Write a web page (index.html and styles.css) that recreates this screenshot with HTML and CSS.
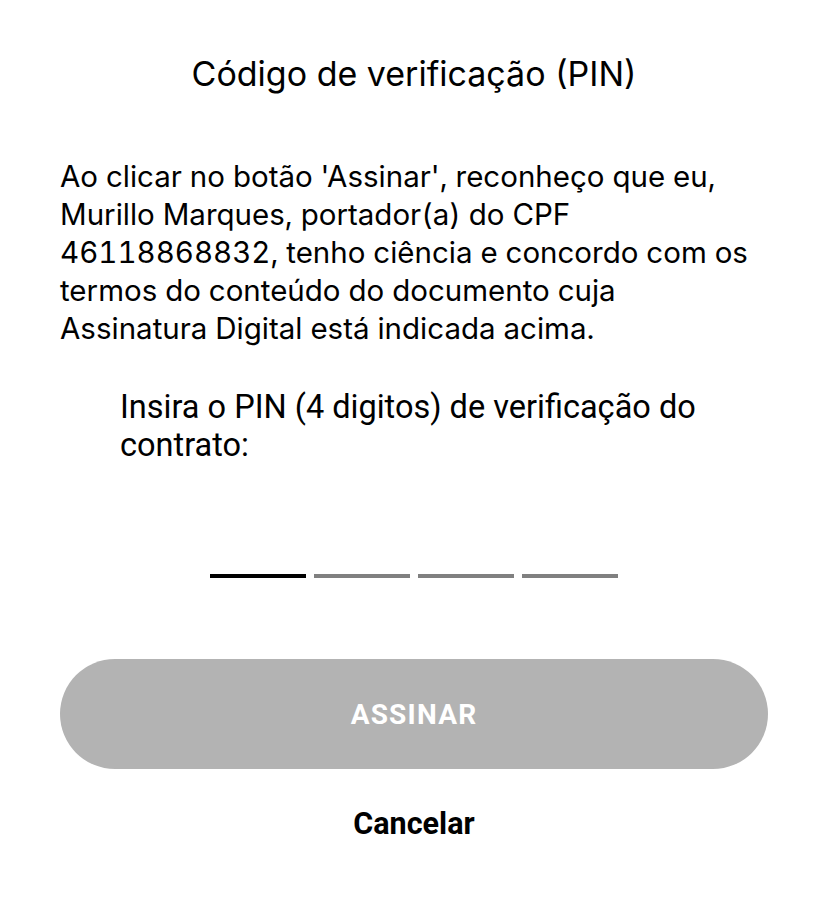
FILE: index.html
```html
<!DOCTYPE html>
<html lang="pt">
<head>
<meta charset="utf-8">
<link rel="stylesheet" href="styles.css">
</head>
<body>
<main class="sheet">
  <h1 class="title">Código de verificação (PIN)</h1>
  <p class="terms">Ao clicar no botão 'Assinar', reconheço que eu, Murillo Marques, portador(a) do CPF 46118868832, tenho ciência e concordo com os termos do conteúdo do documento cuja Assinatura Digital está indicada acima.</p>
  <p class="prompt">Insira o PIN (4 digitos) de verificação do contrato:</p>
  <div class="pin">
    <span class="slot active"></span>
    <span class="slot"></span>
    <span class="slot"></span>
    <span class="slot"></span>
  </div>
  <button class="sign" type="button">ASSINAR</button>
  <button class="cancel" type="button">Cancelar</button>
</main>
</body>
</html>
```

FILE: styles.css
```css
html, body {
  margin: 0;
  padding: 0;
  background: #ffffff;
}
.sheet {
  width: 828px;
  height: 916px;
  box-sizing: border-box;
  padding: 0 60px;
  display: flex;
  flex-direction: column;
  font-family: Inter, "Liberation Sans", sans-serif;
  color: #000;
}
.title {
  margin: 51px 0 0;
  font-size: 34px;
  font-weight: 400;
  line-height: 46px;
  text-align: center;
}
.terms {
  margin: 60px 0 0;
  font-size: 29.5px;
  line-height: 38px;
  font-weight: 400;
  font-variant-numeric: tabular-nums;
}
.prompt {
  margin: 41px 0 0 60px;
  font-family: Roboto, sans-serif;
  font-size: 32.5px;
  line-height: 38px;
}
.pin {
  display: flex;
  justify-content: center;
  gap: 8px;
  margin-top: 110px;
}
.slot {
  width: 96px;
  height: 4px;
  background: #808080;
}
.slot.active {
  background: #000;
}
.sign {
  margin-top: 81px;
  height: 110px;
  border: none;
  border-radius: 55px;
  background: #b3b3b3;
  color: #fff;
  font-family: Roboto, sans-serif;
  font-weight: 700;
  font-size: 28px;
  letter-spacing: 1.2px;
}
.cancel {
  margin-top: 35px;
  align-self: center;
  border: none;
  background: none;
  padding: 0;
  font-family: Roboto, sans-serif;
  font-weight: 700;
  font-size: 30.5px;
  line-height: 40px;
  color: #000;
}
```
